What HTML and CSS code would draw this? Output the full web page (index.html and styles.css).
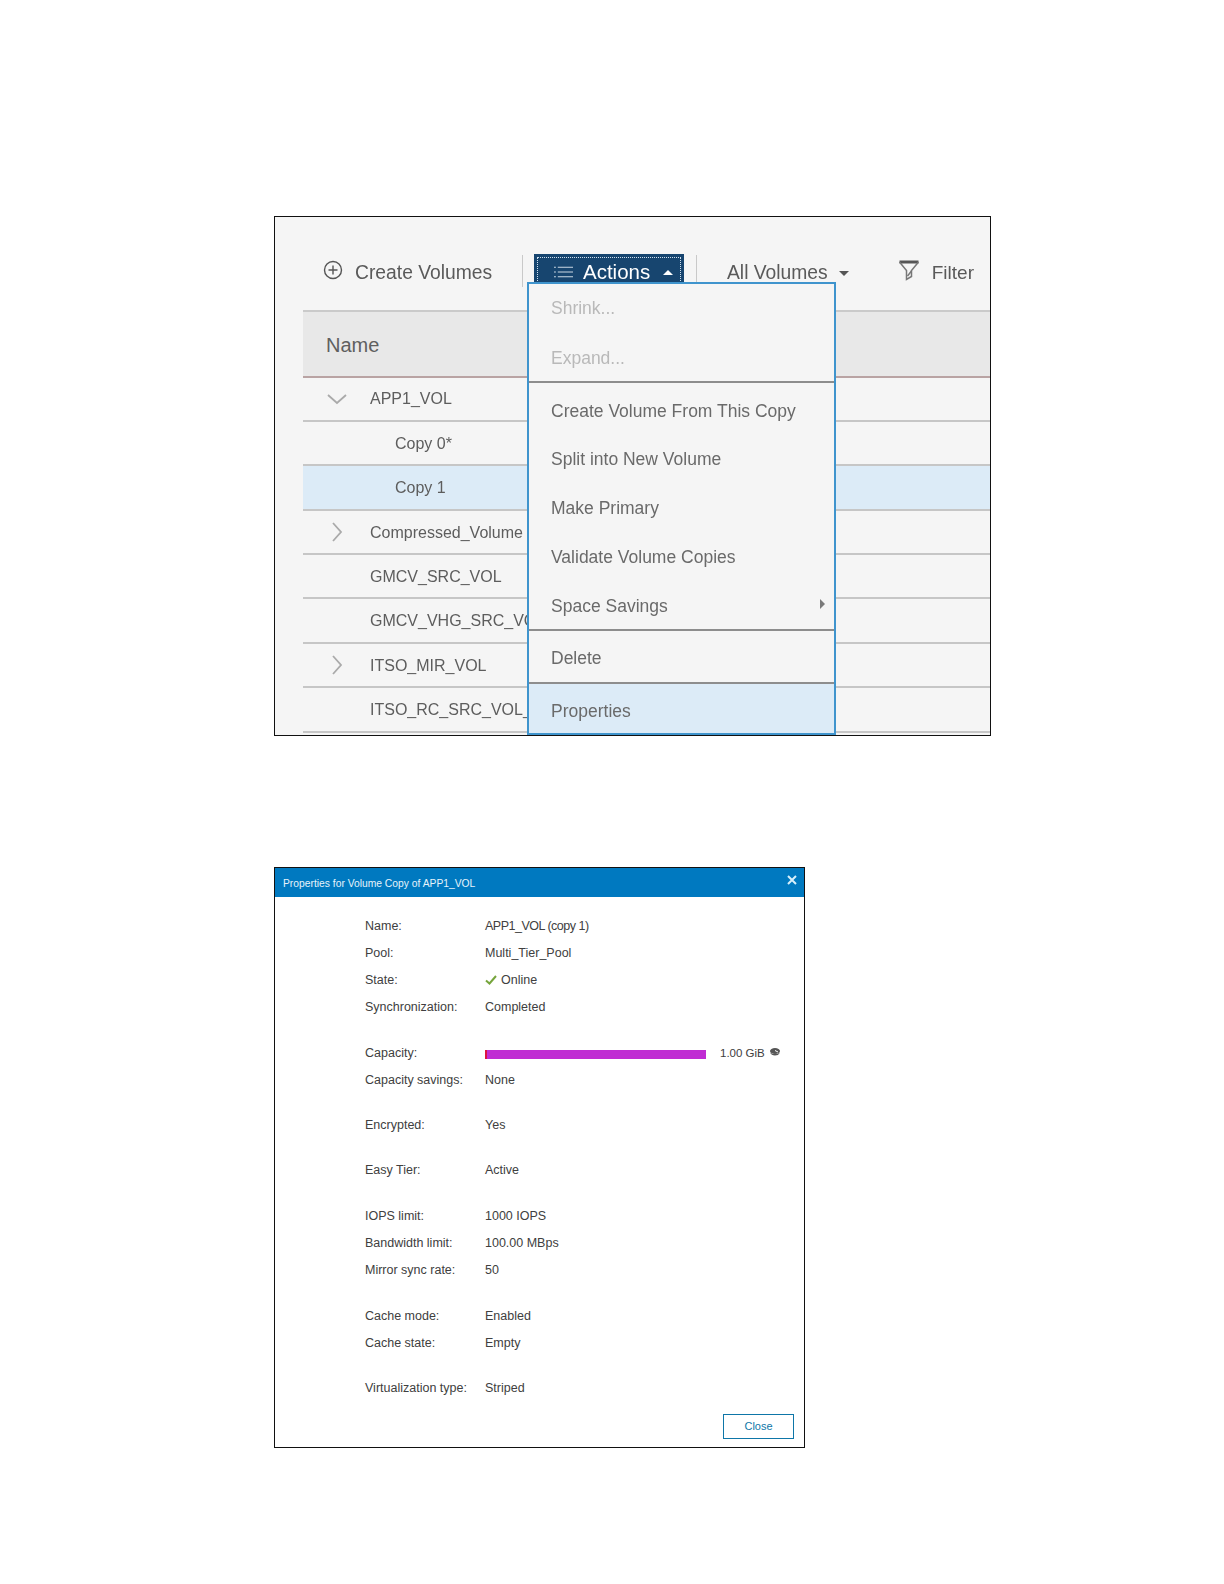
FILE: index.html
```html
<!DOCTYPE html>
<html lang="en">
<head>
<meta charset="utf-8">
<title>Volume copy properties</title>
<link rel="stylesheet" href="styles.css">
</head>
<body>
<section class="shot">
  <div class="toolbar">
    <svg class="ico-plus" viewBox="0 0 20 20"><circle cx="10" cy="10" r="8.5"/><path d="M10 5.500v9M5.500 10h9"/></svg>
    <span class="tool create">Create Volumes</span>
    <span class="sep"></span>
    <span class="actions">
      <svg class="ico-list" viewBox="0 0 20 12"><path d="M0 1h2M4 1h16M0 6h2M4 6h16M0 11h2M4 11h16"/></svg>
      <span class="actions-label">Actions</span>
      <span class="caret-up"></span>
    </span>
    <span class="sep"></span>
    <span class="tool all">All Volumes</span>
    <span class="caret-down"></span>
    <svg class="ico-filter" viewBox="0 0 21 21"><path class="top" d="M1 2h19"/><path d="M1 2l7 8.500v9l5-3v-6l7-8.500"/><path d="M9 16l4-5"/></svg>
    <span class="tool filter">Filter</span>
  </div>
  <div class="table">
    <div class="thead">Name</div>
    <div class="row"><svg class="chev" viewBox="0 0 20 20"><path d="M1 6l9 8 9-8"/></svg>APP1_VOL</div>
    <div class="row child">Copy 0*</div>
    <div class="row child selected">Copy 1</div>
    <div class="row"><svg class="chev" viewBox="0 0 20 20"><path d="M6 1l8 9-8 9"/></svg>Compressed_Volume</div>
    <div class="row plain">GMCV_SRC_VOL</div>
    <div class="row plain">GMCV_VHG_SRC_VOL</div>
    <div class="row"><svg class="chev" viewBox="0 0 20 20"><path d="M6 1l8 9-8 9"/></svg>ITSO_MIR_VOL</div>
    <div class="row plain">ITSO_RC_SRC_VOL_1</div>
  </div>
  <div class="menu">
    <div class="mgroup first">
      <div class="mi off">Shrink...</div>
      <div class="mi off">Expand...</div>
    </div>
    <div class="mgroup second">
      <div class="mi">Create Volume From This Copy</div>
      <div class="mi">Split into New Volume</div>
      <div class="mi">Make Primary</div>
      <div class="mi">Validate Volume Copies</div>
      <div class="mi">Space Savings<span class="caret-right"></span></div>
    </div>
    <div class="mgroup third"><div class="mi">Delete</div></div>
    <div class="mgroup last"><div class="mi">Properties</div></div>
  </div>
</section>

<section class="dialog">
  <header class="dialog-title">
    <span>Properties for Volume Copy of APP1_VOL</span>
    <svg class="ico-x" viewBox="0 0 10 10"><path d="M1 1l8 8M9 1l-8 8"/></svg>
  </header>
  <div class="props">
    <div class="group">
      <div class="prop"><span class="k">Name:</span><span class="tight">APP1_VOL (copy 1)</span></div>
      <div class="prop"><span class="k">Pool:</span><span>Multi_Tier_Pool</span></div>
      <div class="prop"><span class="k">State:</span><span class="state"><svg class="ico-check" viewBox="0 0 12 10"><path d="M1 5.500l3.500 3L11 1"/></svg>Online</span></div>
      <div class="prop"><span class="k">Synchronization:</span><span>Completed</span></div>
    </div>
    <div class="group">
      <div class="prop"><span class="k">Capacity:</span><span class="bar"><span class="bar-used"></span></span><span class="cap">1.00 GiB</span><svg class="ico-stack" viewBox="0 0 10 9"><ellipse cx="5" cy="3" rx="5" ry="3"/><path d="M0 4.500c1 2 2.500 3 5 3l3-.5 2-2.500-3 1.500H3z"/><path class="notch" d="M5 2.500l3 1.500"/></svg></div>
      <div class="prop"><span class="k">Capacity savings:</span><span>None</span></div>
    </div>
    <div class="group"><div class="prop"><span class="k">Encrypted:</span><span>Yes</span></div></div>
    <div class="group"><div class="prop"><span class="k">Easy Tier:</span><span>Active</span></div></div>
    <div class="group">
      <div class="prop"><span class="k">IOPS limit:</span><span>1000 IOPS</span></div>
      <div class="prop"><span class="k">Bandwidth limit:</span><span>100.00 MBps</span></div>
      <div class="prop"><span class="k">Mirror sync rate:</span><span>50</span></div>
    </div>
    <div class="group">
      <div class="prop"><span class="k">Cache mode:</span><span>Enabled</span></div>
      <div class="prop"><span class="k">Cache state:</span><span>Empty</span></div>
    </div>
    <div class="group"><div class="prop"><span class="k">Virtualization type:</span><span>Striped</span></div></div>
  </div>
  <footer class="dialog-foot"><button class="close" type="button">Close</button></footer>
</section>
</body>
</html>
```

FILE: styles.css
```css
* { box-sizing: border-box; }
html, body { margin: 0; padding: 0; background: #fff; }
body {
  width: 1224px;
  height: 1584px;
  padding: 216px 0 0 274px;
  font-family: "Liberation Sans", Arial, sans-serif;
  overflow: hidden;
}

/* Upper figure */
.shot {
  position: relative;
  width: 717px;
  height: 520px;
  border: 1px solid #111;
  background: #f5f5f5;
  overflow: hidden;
  color: #555;
}
.toolbar {
  height: 93px;
  padding: 39px 0 0 48px;
  display: flex;
  align-items: flex-start;
  font-size: 19.300px;
  line-height: 34px;
  filter: blur(0.35px);
}
.tool { color: #5a5a5a; }
.filter { font-size: 19px; }
.ico-plus { width: 20px; height: 20px; margin: 4px 12px 0 0; flex: none; fill: none; stroke: #555; stroke-width: 1.400; }
.create { width: 167px; flex: none; }
.sep { width: 1px; height: 32px; margin-top: -1px; background: #c9c9c9; flex: none; }
.actions {
  width: 150px;
  height: 60px;
  margin: -2px 0 0 11px;
  padding: 0 0 0 20px;
  background: #17456f;
  color: #fff;
  display: flex;
  align-items: flex-start;
  flex: none;
  font-size: 20.500px;
  outline: 1px dotted #cfe0ee;
  outline-offset: -4px;
}
.ico-list { width: 19px; height: 12px; margin: 12px 10px 0 0; fill: none; stroke: #d5e0ea; stroke-width: 1; flex: none; }
.actions-label { line-height: 36px; }
.caret-up {
  width: 0; height: 0;
  margin: 16px 0 0 13px;
  border: 5px solid transparent;
  border-top: 0;
  border-bottom-color: #fff;
}
.actions + .sep { margin-left: 12px; }
.all { margin-left: 30px; }
.caret-down {
  width: 0; height: 0;
  margin: 15px 0 0 11px;
  border: 5px solid transparent;
  border-bottom: 0;
  border-top-color: #555;
}
.ico-filter { width: 22px; height: 21px; margin: 4px 12px 0 49px; fill: none; stroke: #777; stroke-width: 1.500; flex: none; }
.ico-filter .top { stroke: #555; stroke-width: 3; }

.table { margin-left: 28px; font-size: 16px; filter: blur(0.35px); }
.thead {
  height: 67.500px;
  padding-left: 23px;
  background: #e8e8e8;
  border-top: 2px solid #cacaca;
  border-bottom: 2px solid #b9a3a3;
  font-size: 20px;
  line-height: 67px;
  color: #5f5f5f;
}
.row {
  height: 44.400px;
  border-bottom: 2px solid #c6c6c6;
  display: flex;
  align-items: center;
  padding: 1.500px 0 0 24px;
  white-space: nowrap;
  color: #5d5d5d;
}
.row.plain { padding-left: 67px; }
.row.child { padding-left: 92px; }
.row.selected { background: #dcebf7; }
.chev { width: 20px; height: 20px; margin: -1.500px 23px 0 0; fill: none; stroke: #aaa; stroke-width: 1.800; flex: none; }

.menu {
  position: absolute;
  left: 252px;
  top: 65px;
  width: 309px;
  height: 453px;
  border: 2px solid #3f94cd;
  background: #f5f5f5;
  font-size: 17.500px;
  color: #6a6a6a;
  overflow: hidden;
}
.mgroup { border-bottom: 2px solid #8d8d8d; }
.mgroup.first { height: 99px; }
.mgroup.second { height: 247.500px; padding-top: 3.500px; }
.mgroup.third { height: 53px; padding-top: 3px; }
.mgroup.last { border-bottom: 0; background: #dcebf7; height: 51px; padding-top: 3px; }
.mi {
  position: relative;
  height: 48.750px;
  padding-left: 22px;
  line-height: 48px;
  filter: blur(0.35px);
}
.mi.off { color: #b9b9b9; height: 49.500px; line-height: 49.500px; }
.caret-right {
  position: absolute;
  right: 9px;
  top: 17px;
  border: 5px solid transparent;
  border-right: 0;
  border-left-color: #7a7a7a;
}

/* Lower figure */
.dialog {
  width: 531px;
  height: 581px;
  margin-top: 131px;
  border: 1px solid #111;
  background: #fff;
  color: #404040;
  font-size: 12.500px;
}
.dialog-title {
  height: 29px;
  padding: 2px 7px 0 8px;
  background: #0079c0;
  color: #e6f3fb;
  font-size: 10.300px;
  display: flex;
  align-items: center;
  justify-content: space-between;
}
.ico-x { width: 10px; height: 10px; margin: -8px 0 0 0; fill: none; stroke: #d8f0fb; stroke-width: 2; }
.props { padding: 15px 0 0 90px; }
.group { margin-bottom: 18.200px; }
.prop { height: 27.200px; display: flex; align-items: center; white-space: nowrap; }
.k { width: 120px; flex: none; }
.tight { letter-spacing: -0.5px; }
.state { display: flex; align-items: center; }
.ico-check { width: 12px; height: 10px; margin-right: 4px; fill: none; stroke: #76a53c; stroke-width: 2; }
.bar { display: block; width: 221px; height: 9px; margin-top: 4px; background: #c02cd3; flex: none; }
.bar-used { display: block; width: 2px; height: 100%; background: #dc1340; }
.cap { margin-left: 14px; font-size: 11.500px; }
.ico-stack { width: 10px; height: 9px; margin: -1px 0 0 5px; fill: #555; }
.ico-stack .notch { fill: none; stroke: #fff; stroke-width: 1; }
.dialog-foot { display: flex; justify-content: flex-end; padding: 0 10px 0 0; margin-top: -6.400px; }
.close {
  width: 71px;
  height: 25px;
  padding: 0;
  border: 1px solid #0e76a8;
  background: #fff;
  color: #0e76a8;
  font: 11px "Liberation Sans", Arial, sans-serif;
}
```
